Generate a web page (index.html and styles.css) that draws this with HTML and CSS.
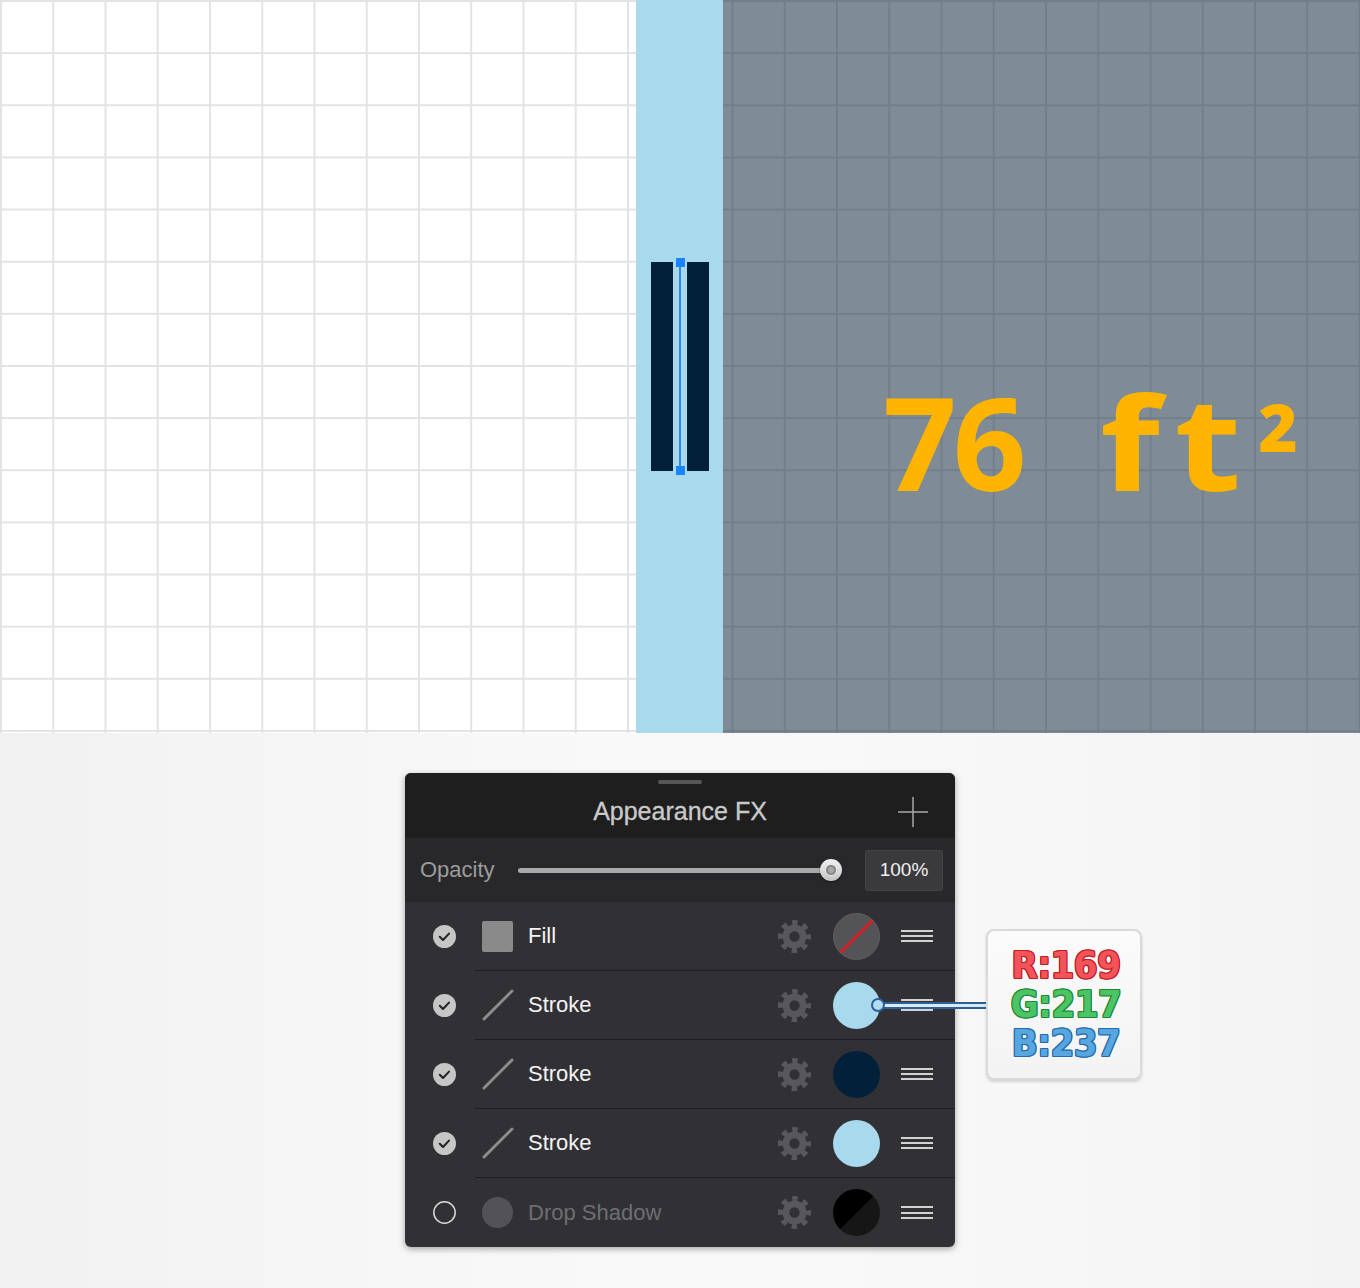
FILE: index.html
```html
<!DOCTYPE html>
<html lang="en">
<head>
<meta charset="utf-8">
<title>Appearance FX</title>
<link rel="stylesheet" href="styles.css">
</head>
<body>
<section class="canvas">
  <div class="paper"></div>
  <div class="band">
    <div class="wall">
      <div class="bar"></div>
      <div class="guide"><span class="handle handle-top"></span><span class="handle handle-bottom"></span></div>
      <div class="bar"></div>
    </div>
  </div>
  <div class="slab">
    <div class="area-label">
      <span class="num">76</span><span class="unit">ft</span><span class="sq">²</span>
    </div>
  </div>
</section>

<section class="desk">
  <div class="panel">
    <header class="panel-head">
      <span></span>
      <h1 class="panel-title">Appearance FX</h1>
      <svg class="add" width="30" height="30" viewBox="0 0 30 30"><path d="M15 0V30M0 15H30" stroke="#a9a9a9" stroke-width="1.5" fill="none"/></svg>
    </header>

    <div class="opacity-row">
      <span class="opacity-label">Opacity</span>
      <div class="slider"><div class="track"></div><span class="thumb"></span></div>
      <div class="value-box">100%</div>
    </div>

    <ul class="layers">
      <li class="layer">
        <div class="cell-check"><svg class="check" width="23" height="23" viewBox="0 0 23 23"><circle cx="11.5" cy="11.5" r="11.5" fill="#c6c6c6"/><path d="M6.8 11.8l3.2 3.2 6-6.4" stroke="#222" stroke-width="2" fill="none" stroke-linecap="round" stroke-linejoin="round"/></svg></div>
        <div class="cell-main">
          <span class="icon-fill"></span>
          <span class="layer-name">Fill</span>
          <svg class="gear" width="33" height="33" viewBox="0 0 32 32"><circle cx="16" cy="16" r="13.3" fill="none" stroke="#58585c" stroke-width="5.4" stroke-dasharray="5.2 5.25" stroke-dashoffset="2.6"/><circle cx="16" cy="16" r="8.3" fill="none" stroke="#58585c" stroke-width="6.6"/></svg>
          <span class="swatch swatch-none"></span>
          <span class="grip-lines"><i></i><i></i><i></i></span>
        </div>
      </li>
      <li class="layer">
        <div class="cell-check"><svg class="check" width="23" height="23" viewBox="0 0 23 23"><circle cx="11.5" cy="11.5" r="11.5" fill="#c6c6c6"/><path d="M6.8 11.8l3.2 3.2 6-6.4" stroke="#222" stroke-width="2" fill="none" stroke-linecap="round" stroke-linejoin="round"/></svg></div>
        <div class="cell-main">
          <svg class="icon-stroke" width="32" height="32" viewBox="0 0 32 32"><path d="M2 30L30 2" stroke="#8c8c8c" stroke-width="3" stroke-linecap="round"/></svg>
          <span class="layer-name">Stroke</span>
          <svg class="gear" width="33" height="33" viewBox="0 0 32 32"><circle cx="16" cy="16" r="13.3" fill="none" stroke="#58585c" stroke-width="5.4" stroke-dasharray="5.2 5.25" stroke-dashoffset="2.6"/><circle cx="16" cy="16" r="8.3" fill="none" stroke="#58585c" stroke-width="6.6"/></svg>
          <span class="swatch swatch-light"></span>
          <span class="grip-lines"><i></i><i></i><i></i></span>
        </div>
      </li>
      <li class="layer">
        <div class="cell-check"><svg class="check" width="23" height="23" viewBox="0 0 23 23"><circle cx="11.5" cy="11.5" r="11.5" fill="#c6c6c6"/><path d="M6.8 11.8l3.2 3.2 6-6.4" stroke="#222" stroke-width="2" fill="none" stroke-linecap="round" stroke-linejoin="round"/></svg></div>
        <div class="cell-main">
          <svg class="icon-stroke" width="32" height="32" viewBox="0 0 32 32"><path d="M2 30L30 2" stroke="#8c8c8c" stroke-width="3" stroke-linecap="round"/></svg>
          <span class="layer-name">Stroke</span>
          <svg class="gear" width="33" height="33" viewBox="0 0 32 32"><circle cx="16" cy="16" r="13.3" fill="none" stroke="#58585c" stroke-width="5.4" stroke-dasharray="5.2 5.25" stroke-dashoffset="2.6"/><circle cx="16" cy="16" r="8.3" fill="none" stroke="#58585c" stroke-width="6.6"/></svg>
          <span class="swatch swatch-navy"></span>
          <span class="grip-lines"><i></i><i></i><i></i></span>
        </div>
      </li>
      <li class="layer">
        <div class="cell-check"><svg class="check" width="23" height="23" viewBox="0 0 23 23"><circle cx="11.5" cy="11.5" r="11.5" fill="#c6c6c6"/><path d="M6.8 11.8l3.2 3.2 6-6.4" stroke="#222" stroke-width="2" fill="none" stroke-linecap="round" stroke-linejoin="round"/></svg></div>
        <div class="cell-main">
          <svg class="icon-stroke" width="32" height="32" viewBox="0 0 32 32"><path d="M2 30L30 2" stroke="#8c8c8c" stroke-width="3" stroke-linecap="round"/></svg>
          <span class="layer-name">Stroke</span>
          <svg class="gear" width="33" height="33" viewBox="0 0 32 32"><circle cx="16" cy="16" r="13.3" fill="none" stroke="#58585c" stroke-width="5.4" stroke-dasharray="5.2 5.25" stroke-dashoffset="2.6"/><circle cx="16" cy="16" r="8.3" fill="none" stroke="#58585c" stroke-width="6.6"/></svg>
          <span class="swatch swatch-light"></span>
          <span class="grip-lines"><i></i><i></i><i></i></span>
        </div>
      </li>
      <li class="layer layer-off">
        <div class="cell-check"><svg class="check" width="23" height="23" viewBox="0 0 23 23"><circle cx="11.5" cy="11.5" r="10.7" fill="none" stroke="#d8d8d8" stroke-width="1.5"/></svg></div>
        <div class="cell-main">
          <span class="icon-shadow"></span>
          <span class="layer-name">Drop Shadow</span>
          <svg class="gear" width="33" height="33" viewBox="0 0 32 32"><circle cx="16" cy="16" r="13.3" fill="none" stroke="#58585c" stroke-width="5.4" stroke-dasharray="5.2 5.25" stroke-dashoffset="2.6"/><circle cx="16" cy="16" r="8.3" fill="none" stroke="#58585c" stroke-width="6.6"/></svg>
          <span class="swatch swatch-black"></span>
          <span class="grip-lines"><i></i><i></i><i></i></span>
        </div>
      </li>
    </ul>

    <div class="connector"><span class="connector-line"></span><span class="connector-dot"></span></div>
    <div class="callout">
      <span class="rgb rgb-r">R:169</span>
      <span class="rgb rgb-g">G:217</span>
      <span class="rgb rgb-b">B:237</span>
    </div>
  </div>
</section>
</body>
</html>
```

FILE: styles.css
```css
* { box-sizing: border-box; }
html, body { margin: 0; padding: 0; }
body {
  width: 1360px;
  height: 1288px;
  overflow: hidden;
  font-family: "Liberation Sans", Arial, sans-serif;
  background: #f3f3f3;
}

/* ---------- canvas ---------- */
.canvas {
  display: flex;
  height: 733px;
  background: #fff;
}
.paper {
  width: 636px;
  background-color: #fff;
  background-image:
    linear-gradient(to right, #e3e3e3 0, #e3e3e3 2px, transparent 2px),
    linear-gradient(to bottom, #e3e3e3 0, #e3e3e3 2px, transparent 2px);
  background-size: 52.25px 52.15px;
  background-position: 0 0;
}
.band {
  width: 87px;
  background: #a9d9ed;
  padding: 262px 0 0 15px;
}
.wall {
  display: flex;
  height: 209px;
  gap: 6px;
}
.bar {
  width: 22px;
  background: #03203a;
}
.guide {
  position: relative;
  width: 2px;
  background: #2a8af5;
}
.handle {
  position: absolute;
  left: -3.5px;
  width: 9px;
  height: 9px;
  background: #1a84ff;
}
.handle-top { top: -4px; }
.handle-bottom { bottom: -4px; }

.slab {
  flex: 1;
  background-color: #7f8b95;
  background-image:
    linear-gradient(to right, #727e88 0, #727e88 2px, transparent 2px),
    linear-gradient(to bottom, #727e88 0, #727e88 2px, transparent 2px);
  background-size: 52.25px 52.15px;
  background-position: 8.5px 0;
  padding: 377px 0 0 160px;
}
.area-label {
  display: flex;
  align-items: flex-start;
  color: #ffb400;
  font-family: "Open Sans", sans-serif;
  font-weight: 700;
  font-size: 129px;
  line-height: 1;
}
.num { letter-spacing: -4px; }
.unit { margin-left: 77px; letter-spacing: 12px; transform: scaleX(1.2); transform-origin: left; }
.sq { font-size: 110px; margin-left: 28px; margin-top: 23px; }

/* ---------- desk ---------- */
.desk {
  height: 555px;
  display: flex;
  justify-content: center;
  padding-top: 40px;
  background: linear-gradient(to right, #f1f1f1 0%, #f4f4f4 15%, #f9f9f9 45%, #f9f9f9 60%, #f3f3f3 100%);
}
.panel {
  position: relative;
  width: 550px;
  height: 474px;
  border-radius: 6px;
  background: #313135;
  box-shadow: 0 2px 6px rgba(0,0,0,0.35);
  display: flex;
  flex-direction: column;
}

.panel-head {
  position: relative;
  height: 65px;
  padding-top: 12px;
  background: #1e1e1f;
  border-radius: 6px 6px 0 0;
  display: grid;
  grid-template-columns: 1fr auto 1fr;
  align-items: center;
}
.panel-head::before {
  content: "";
  position: absolute;
  top: 7px;
  left: 253px;
  width: 44px;
  height: 4px;
  border-radius: 2px;
  background: #565656;
}
.panel-title {
  margin: 0;
  font-weight: 400;
  font-size: 25px;
  color: #cacaca;
  -webkit-text-stroke: 0.3px #cacaca;
}
.add {
  justify-self: end;
  margin-right: 27px;
}

.opacity-row {
  height: 64px;
  background: #28282b;
  display: flex;
  align-items: center;
  padding: 0 12px 0 15px;
}
.opacity-label {
  font-size: 22px;
  color: #9c9c9c;
  width: 98px;
  flex-shrink: 0;
}
.slider {
  position: relative;
  width: 324px;
  height: 22px;
  flex-shrink: 0;
  display: flex;
  align-items: center;
}
.track {
  width: 313px;
  height: 5px;
  border-radius: 3px;
  background: #a9a9a9;
}
.thumb {
  position: absolute;
  right: 0;
  top: 0;
  width: 22px;
  height: 22px;
  border-radius: 50%;
  background: linear-gradient(#f2f2f2, #c4c4c4);
  box-shadow: 0 1px 2px rgba(0,0,0,0.5);
  display: flex;
  align-items: center;
  justify-content: center;
}
.thumb::after {
  content: "";
  width: 10px;
  height: 10px;
  border-radius: 50%;
  background: radial-gradient(circle, #a8a8a8 0, #a8a8a8 2.5px, #7d7d7d 4px);
  border: 1px solid #e6e6e6;
}
.value-box {
  margin-left: 23px;
  width: 78px;
  height: 41px;
  flex-shrink: 0;
  border-radius: 3px;
  background: #3a3a3c;
  border: 1px solid #434345;
  color: #f0f0f0;
  font-size: 19px;
  display: flex;
  align-items: center;
  justify-content: center;
}

/* ---------- layers ---------- */
.layers {
  list-style: none;
  margin: 0;
  padding: 0;
}
.layer {
  display: flex;
  height: 69px;
}
.cell-check {
  width: 70px;
  padding-left: 28px;
  display: flex;
  align-items: center;
}
.cell-main {
  flex: 1;
  display: flex;
  align-items: center;
  padding: 0 22px 0 7px;
  border-bottom: 1px solid #1f1f22;
}
.layer:last-child .cell-main { border-bottom: none; }

.icon-fill {
  width: 31px;
  height: 31px;
  border-radius: 2px;
  background: #8a8a8a;
}
.icon-stroke { width: 32px; height: 32px; margin-right: -1px; }
.icon-shadow {
  width: 31px;
  height: 31px;
  border-radius: 50%;
  background: #535357;
}
.layer-name {
  flex: 1;
  margin-left: 15px;
  font-size: 22px;
  color: #f4f4f4;
}
.layer-off .layer-name { color: #6e6e72; }
.gear { margin-right: 22px; }
.swatch {
  width: 47px;
  height: 47px;
  border-radius: 50%;
  margin-right: 21px;
}
.swatch-none {
  background:
    linear-gradient(135deg, transparent calc(50% - 1.6px), #c3272d calc(50% - 1.6px), #c3272d calc(50% + 1.6px), transparent calc(50% + 1.6px)),
    #545457;
  border: 1px solid #5f5f63;
}
.swatch-light { background: #a9d9ed; }
.swatch-navy { background: #03203a; }
.swatch-black { background: linear-gradient(135deg, #000 50%, #161616 50%); }
.grip-lines {
  width: 32px;
  display: flex;
  flex-direction: column;
  gap: 3.4px;
}
.grip-lines i {
  display: block;
  height: 2px;
  background: #d2d2d2;
}

/* ---------- callout ---------- */
.connector {
  position: absolute;
  left: 466px;
  top: 225px;
  width: 117px;
  height: 14px;
}
.connector-line {
  position: absolute;
  left: 8px;
  right: 0;
  top: 3.5px;
  height: 7px;
  background: #d7ecf7;
  border-top: 2px solid #2c5f9c;
  border-bottom: 2px solid #2c5f9c;
}
.connector-dot {
  position: absolute;
  left: 0;
  top: 0;
  width: 14px;
  height: 14px;
  border-radius: 50%;
  background: #b5dcf0;
  border: 2px solid #2c5f9c;
}
.callout {
  position: absolute;
  left: 581px;
  top: 156px;
  width: 156px;
  height: 151px;
  border-radius: 8px;
  background: linear-gradient(#fbfbfb, #f3f3f3);
  border: 2px solid #d9d9d9;
  box-shadow: 0 2px 3px rgba(0,0,0,0.15);
  display: flex;
  flex-direction: column;
  align-items: center;
  justify-content: center;
  padding-left: 4px;
}
.rgb {
  font-family: "DejaVu Sans Condensed", "DejaVu Sans", sans-serif;
  font-stretch: condensed;
  font-weight: 700;
  font-size: 38px;
  line-height: 39px;
  letter-spacing: -0.5px;
}
.rgb-r {
  color: #f2545a;
  text-shadow: 1px 0 #c21c25, -1px 0 #c21c25, 0 1px #c21c25, 0 -1px #c21c25, 1px 1px #c21c25, -1px -1px #c21c25, 1px -1px #c21c25, -1px 1px #c21c25;
}
.rgb-g {
  color: #4cc465;
  text-shadow: 1px 0 #1c8a35, -1px 0 #1c8a35, 0 1px #1c8a35, 0 -1px #1c8a35, 1px 1px #1c8a35, -1px -1px #1c8a35, 1px -1px #1c8a35, -1px 1px #1c8a35;
}
.rgb-b {
  color: #58a6e0;
  text-shadow: 1px 0 #1f6bab, -1px 0 #1f6bab, 0 1px #1f6bab, 0 -1px #1f6bab, 1px 1px #1f6bab, -1px -1px #1f6bab, 1px -1px #1f6bab, -1px 1px #1f6bab;
}
```
